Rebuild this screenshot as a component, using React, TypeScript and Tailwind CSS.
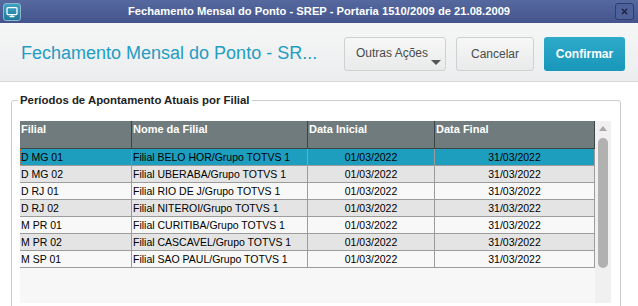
import { Monitor, X } from "lucide-react";

const rows = [
  { filial: "D MG 01", nome: "Filial BELO HOR/Grupo TOTVS 1" },
  { filial: "D MG 02", nome: "Filial UBERABA/Grupo TOTVS 1" },
  { filial: "D RJ 01", nome: "Filial RIO DE J/Grupo TOTVS 1" },
  { filial: "D RJ 02", nome: "Filial NITEROI/Grupo TOTVS 1" },
  { filial: "M PR 01", nome: "Filial CURITIBA/Grupo TOTVS 1" },
  { filial: "M PR 02", nome: "Filial CASCAVEL/Grupo TOTVS 1" },
  { filial: "M SP 01", nome: "Filial SAO PAUL/Grupo TOTVS 1" },
];

const cols = "grid grid-cols-[112px_176px_127px_160px]";

export default function App() {
  return (
    <div className="w-[638px] h-[306px] overflow-hidden flex flex-col bg-white font-['Liberation_Sans',Arial,sans-serif]">
      {/* window title */}
      <div className="h-[23px] shrink-0 flex items-center px-[3px] bg-gradient-to-b from-[#56699f] to-[#43558c]">
        <div className="w-[18px] h-[18px] rounded-[3px] border border-[#8fb7c9] bg-gradient-to-b from-[#3fa3c4] to-[#1b7a9e] flex items-center justify-center">
          <Monitor className="w-[12px] h-[12px] text-white" strokeWidth={2.5} />
        </div>
        <div className="flex-1 text-center text-white font-bold text-[11.2px] pl-[2px] whitespace-nowrap">
          Fechamento Mensal do Ponto - SREP - Portaria 1510/2009 de 21.08.2009
        </div>
        <div className="w-[19px] h-[17px] mr-[1px] rounded-[3px] border border-[#2f3d6a] bg-[#4e619a] flex items-center justify-center">
          <X className="w-[9px] h-[9px] text-[#1e2540]" strokeWidth={4} />
        </div>
      </div>

      {/* header */}
      <div className="h-[59px] shrink-0 flex items-center pl-[21px] pr-[13px] bg-gradient-to-b from-[#f5f6f6] to-[#ecedee] border-b border-[#d6d7d8]">
        <div className="flex-1 text-[18px] text-[#1f9dc3] leading-none pt-[2px] whitespace-nowrap">
          Fechamento Mensal do Ponto - SR...
        </div>
        <div className="flex items-center gap-[10px] pt-[4px]">
          <div className="relative w-[102px] h-[34px] rounded-[3px] border border-[#cfd0d2] bg-gradient-to-b from-[#f7f7f7] to-[#e9eaea] text-[12px] text-[#4a4a4a] flex items-center pl-[11px] pb-[2px]">
            Outras Ações
            <div className="absolute right-[4px] bottom-[5px] w-0 h-0 border-l-[5px] border-r-[5px] border-t-[5px] border-l-transparent border-r-transparent border-t-[#555]" />
          </div>
          <div className="w-[78px] h-[34px] rounded-[3px] border border-[#cfd0d2] bg-gradient-to-b from-[#f7f7f7] to-[#e9eaea] text-[12px] text-[#4a4a4a] flex items-center justify-center">
            Cancelar
          </div>
          <div className="w-[81px] h-[34px] rounded-[3px] bg-gradient-to-b from-[#2eaac9] to-[#1797ba] text-[12px] font-bold text-white flex items-center justify-center">
            Confirmar
          </div>
        </div>
      </div>

      {/* body */}
      <div className="flex-1 pt-[13px] pl-[11px] pr-[17px]">
        <fieldset className="border border-[#cbcbcb] rounded-[3px] pl-[8px] pr-[9px] pt-[15px] h-[240px]">
          <legend className="-ml-[2px] px-[2px] text-[11.4px] font-bold text-[#222] leading-none">
            Períodos de Apontamento Atuais por Filial
          </legend>
          <div className="flex h-[182px] bg-[#f7f7f7]">
            <div className="w-[575px] text-[10.5px] leading-none">
              <div className={`${cols} h-[28px] bg-[#6f7b7c] text-white font-bold border-b border-[#3d4444]`}>
                {["Filial", "Nome da Filial", "Data Inicial", "Data Final"].map((h) => (
                  <div key={h} className="pt-[3px] pl-[1px] border-r border-[#3d4444] text-[11px]">
                    {h}
                  </div>
                ))}
              </div>
              {rows.map((r, i) => {
                const bg = i === 0 ? "bg-[#1e9ebf]" : i % 2 === 1 ? "bg-[#e4e4e4]" : "bg-[#f8f8f8]";
                return (
                  <div key={r.filial} className={`${cols} h-[17px] ${bg} text-black border-b border-[#9c9c9c]`}>
                    <div
                      className={`flex items-center pl-[1px] border-r border-[#9c9c9c] ${
                        i === 0 ? "outline outline-1 outline-dotted outline-[#d9622b] -outline-offset-1" : ""
                      }`}
                    >
                      {r.filial}
                    </div>
                    <div className="flex items-center pl-[1px] border-r border-[#9c9c9c]">{r.nome}</div>
                    <div className="flex items-center justify-center border-r border-[#9c9c9c]">01/03/2022</div>
                    <div className="flex items-center justify-center border-r border-[#9c9c9c]">31/03/2022</div>
                  </div>
                );
              })}
            </div>
            <div className="w-[16px] bg-[#f0f0f0] flex flex-col items-center pt-[5px]">
              <div className="w-0 h-0 border-l-[4px] border-r-[4px] border-b-[5px] border-l-transparent border-r-transparent border-b-[#a9a9a9]" />
              <div className="mt-[7px] w-[10px] h-[130px] rounded-[5px] bg-[#b1b1b1]" />
            </div>
          </div>
        </fieldset>
      </div>
    </div>
  );
}
